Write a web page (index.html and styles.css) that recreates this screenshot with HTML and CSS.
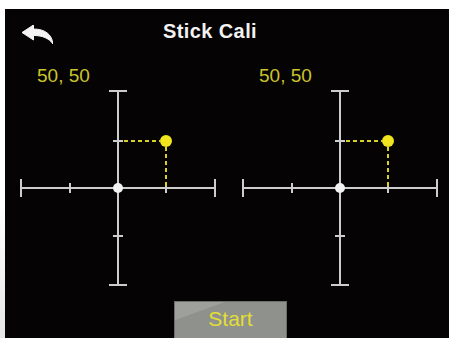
FILE: index.html
```html
<!DOCTYPE html>
<html lang="en">
<head>
<meta charset="UTF-8">
<title>Stick Cali</title>
<link rel="stylesheet" href="styles.css">
</head>
<body>
    <div class="screen">
        <div class="top-bar">
            <svg class="back" width="31" height="19" viewBox="0 0 31 19">
                <path d="M0 7.5 L11.5 0 V4 C23 4 30 9.5 31 19 C27 13.5 21 10.5 11.5 10.5 V15 Z" fill="#f4f4f4" stroke="#f4f4f4" stroke-width="1" stroke-linejoin="round"/>
            </svg>
            <div class="title">Stick Cali</div>
        </div>

        <div class="sticks">
            <div class="stick">
                <div class="value">50, 50</div>
                <svg width="222" height="204" viewBox="0 0 222 204">
                    <g stroke="#cdcdcd" stroke-width="2">
                        <line x1="16" y1="101" x2="210" y2="101"/>
                        <line x1="113" y1="4" x2="113" y2="198"/>
                        <line x1="16" y1="92" x2="16" y2="110"/>
                        <line x1="210" y1="92" x2="210" y2="110"/>
                        <line x1="104" y1="4" x2="122" y2="4"/>
                        <line x1="104" y1="198" x2="122" y2="198"/>
                        <line x1="65" y1="96" x2="65" y2="106"/>
                        <line x1="161" y1="96" x2="161" y2="106"/>
                        <line x1="108" y1="54" x2="118" y2="54"/>
                        <line x1="108" y1="149" x2="118" y2="149"/>
                    </g>
                    <g stroke="#d8d12a" stroke-width="2" stroke-dasharray="4 3">
                        <line x1="119" y1="54" x2="155" y2="54"/>
                        <line x1="161" y1="60" x2="161" y2="100"/>
                    </g>
                    <circle cx="161" cy="54" r="6" fill="#efe41e"/>
                    <circle cx="113" cy="101" r="5" fill="#f2f2f2"/>
                </svg>
            </div>
            <div class="stick">
                <div class="value">50, 50</div>
                <svg width="222" height="204" viewBox="0 0 222 204">
                    <g stroke="#cdcdcd" stroke-width="2">
                        <line x1="16" y1="101" x2="210" y2="101"/>
                        <line x1="113" y1="4" x2="113" y2="198"/>
                        <line x1="16" y1="92" x2="16" y2="110"/>
                        <line x1="210" y1="92" x2="210" y2="110"/>
                        <line x1="104" y1="4" x2="122" y2="4"/>
                        <line x1="104" y1="198" x2="122" y2="198"/>
                        <line x1="65" y1="96" x2="65" y2="106"/>
                        <line x1="161" y1="96" x2="161" y2="106"/>
                        <line x1="108" y1="54" x2="118" y2="54"/>
                        <line x1="108" y1="149" x2="118" y2="149"/>
                    </g>
                    <g stroke="#d8d12a" stroke-width="2" stroke-dasharray="4 3">
                        <line x1="119" y1="54" x2="155" y2="54"/>
                        <line x1="161" y1="60" x2="161" y2="100"/>
                    </g>
                    <circle cx="161" cy="54" r="6" fill="#efe41e"/>
                    <circle cx="113" cy="101" r="5" fill="#f2f2f2"/>
                </svg>
            </div>
        </div>

        <div class="bottom">
            <button class="start">Start</button>
        </div>
    </div>
</body>
</html>
```

FILE: styles.css
```css
html, body{
    margin: 0;
    padding: 0;
    background: #ffffff;
    overflow: hidden;
}
body{
    width: 449px;
    height: 338px;
    padding-top: 9px;
    padding-left: 5px;
    box-sizing: border-box;
    background: linear-gradient(to bottom, #ffffff 0%, #ffffff 60%, #e6e6e6 100%);
}
.screen{
    width: 444px;
    height: 329px;
    background: #050303;
    overflow: hidden;
    display: flex;
    flex-direction: column;
    font-family: "Liberation Sans", Arial, sans-serif;
}
.screen > div{
    flex-shrink: 0;
}
.top-bar{
    display: flex;
    align-items: flex-start;
    height: 56px;
    box-sizing: border-box;
    padding-top: 11px;
    padding-left: 17px;
}
.back{
    margin-top: 5px;
    display: block;
}
.title{
    margin-left: 110px;
    color: #f2f2f2;
    font-size: 20px;
    font-weight: bold;
    letter-spacing: 0.4px;
    line-height: 22px;
}
.sticks{
    display: flex;
}
.stick{
    width: 222px;
    display: flex;
    flex-direction: column;
}
.stick svg{
    display: block;
}
.value{
    padding-left: 32px;
    color: #cbc42c;
    font-size: 19px;
    line-height: 22px;
}
.bottom{
    display: flex;
    justify-content: center;
    padding-top: 10px;
    padding-left: 7px;
}
.start{
    width: 113px;
    height: 42px;
    padding: 0 0 6px 0;
    background: linear-gradient(160deg, #9da09b 0%, #9da09b 22%, #8e918c 23%, #8e918c 100%);
    border: 1px solid #6c6e6a;
    color: #e4de36;
    font-family: "Liberation Sans", Arial, sans-serif;
    font-size: 21px;
}
```
